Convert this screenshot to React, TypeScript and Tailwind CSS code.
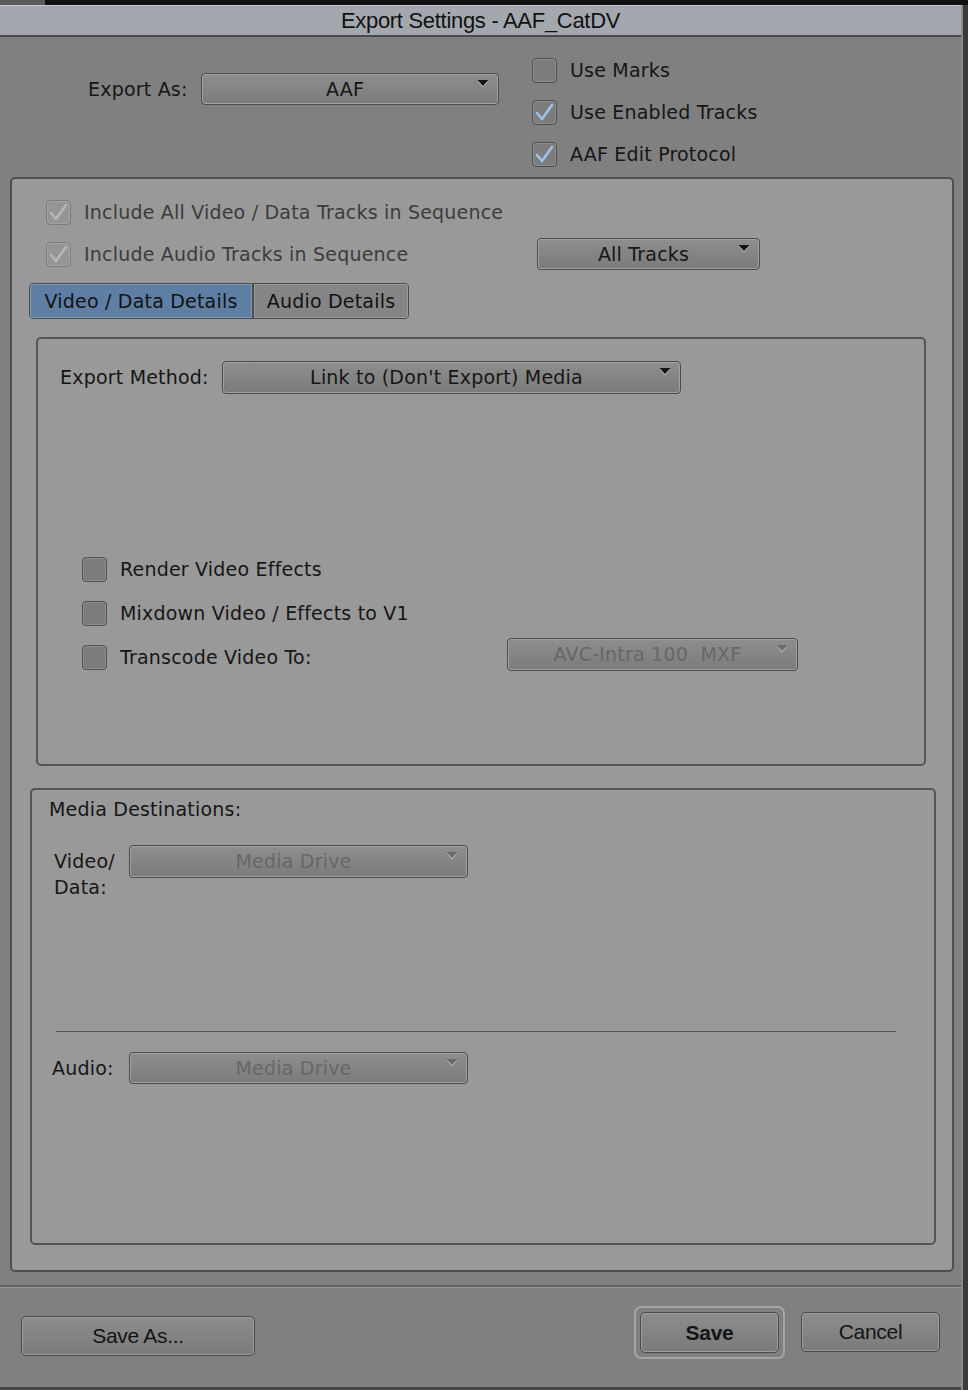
import React from 'react';

const UI = { fontFamily: '"DejaVu Sans", "Liberation Sans", sans-serif' };
const BTN = { fontFamily: '"Liberation Sans", Arial, sans-serif' };

function Arrow({ dim }: { dim?: boolean }) {
  return (
    <svg width="12" height="9" viewBox="0 0 12 9" className="absolute right-[9px] top-[5px]">
      <path d="M0.5 2 L11.5 2 L6 8.5 Z" fill="#b8b8b8" />
      <path d="M0.5 1 L11.5 1 L6 7 Z" fill={dim ? '#6a6a6a' : '#151515'} />
    </svg>
  );
}

function Dropdown({
  label,
  className,
  dim,
}: {
  label: string;
  className: string;
  dim?: boolean;
}) {
  return (
    <div
      className={`relative flex items-center justify-center rounded-[4px] border border-[#4c4c4c] bg-gradient-to-b from-[#8e8e8e] to-[#7b7b7b] shadow-[inset_0_0_0_1px_#a2a2a2] ${
        dim ? 'text-[#676767]' : 'text-[#161616]'
      } ${className}`}
    >
      <span className="pr-[10px] leading-none whitespace-pre">{label}</span>
      <Arrow dim={dim} />
    </div>
  );
}

function Check({ checked, disabled }: { checked?: boolean; disabled?: boolean }) {
  return (
    <div
      className={`relative w-[25px] h-[25px] shrink-0 rounded-[4px] border ${
        disabled
          ? 'border-[#7c7c7c] bg-[#959595] shadow-[inset_0_0_0_1px_#a4a4a4]'
          : 'border-[#505050] bg-[#7c7c7c] shadow-[inset_0_0_0_1px_#8e8e8e]'
      }`}
    >
      {checked && (
        <svg width="25" height="25" viewBox="0 0 25 25" className="absolute -left-px -top-px">
          <path
            d="M5 13 L10 19 L20 5"
            fill="none"
            stroke={disabled ? '#b6b6b6' : '#9cc2ea'}
            strokeWidth="2.6"
            strokeLinecap="round"
            strokeLinejoin="round"
          />
        </svg>
      )}
    </div>
  );
}

function CheckRow({
  label,
  checked,
  disabled,
  h = 'h-[42px]',
}: {
  label: string;
  checked?: boolean;
  disabled?: boolean;
  h?: string;
}) {
  return (
    <div className={`flex items-center gap-[13px] ${h}`}>
      <Check checked={checked} disabled={disabled} />
      <span className={`leading-none whitespace-nowrap ${disabled ? 'text-[#3c3c3c]' : 'text-[#161616]'}`}>
        {label}
      </span>
    </div>
  );
}

function Button({ label, className }: { label: string; className: string }) {
  return (
    <div
      className={`flex items-center justify-center rounded-[5px] border border-[#4a4a4a] bg-gradient-to-b from-[#8d8d8d] to-[#7a7a7a] shadow-[inset_0_0_0_1px_#9c9c9c] text-[21px] tracking-[-0.3px] text-[#141414] ${className}`}
      style={BTN}
    >
      {label}
    </div>
  );
}

export default function App() {
  return (
    <div
      className="w-[968px] h-[1390px] bg-[#2e2e2e] flex flex-col overflow-hidden text-[19px] tracking-[0.2px]"
      style={UI}
    >
      {/* top strip */}
      <div className="h-[5px] bg-[#111111] flex shrink-0">
        <div className="w-[45px] bg-[#5a5a5a]" />
      </div>

      <div className="flex flex-1 min-h-0">
        <div className="w-[961px] flex flex-col bg-[#808080]">
          {/* title bar */}
          <div
            className="h-[32px] shrink-0 flex items-center justify-center bg-[#a3a8ae] border-t border-[#c4c8cc] border-b-2 border-b-[#4a4a4a] text-[22px] text-[#111111] tracking-[-0.3px]"
            style={BTN}
          >
            Export Settings - AAF_CatDV
          </div>

          {/* top options */}
          <div className="flex pt-[12px] h-[140px] shrink-0">
            <div className="flex items-start pl-[88px] pt-[24px] w-[532px] shrink-0">
              <span className="w-[113px] text-[#161616] h-[32px] flex items-center">Export As:</span>
              <Dropdown label="AAF" className="w-[298px] h-[32px]" />
            </div>
            <div className="flex flex-col">
              <CheckRow label="Use Marks" />
              <CheckRow label="Use Enabled Tracks" checked />
              <CheckRow label="AAF Edit Protocol" checked />
            </div>
          </div>

          {/* main panel */}
          <div className="ml-[10px] w-[944px] h-[1095px] shrink-0 rounded-[5px] border-2 border-[#4e4e4e] bg-[#999999] flex flex-col">
            <div className="pt-[12px] pl-[34px]">
              <CheckRow label="Include All Video / Data Tracks in Sequence" checked disabled />
              <div className="flex items-center">
                <div className="w-[491px]">
                  <CheckRow label="Include Audio Tracks in Sequence" checked disabled />
                </div>
                <Dropdown label="All Tracks" className="w-[223px] h-[32px]" />
              </div>
            </div>

            {/* tabs */}
            <div className="mt-[8px] ml-[17px] flex w-fit rounded-[4px] border border-[#4c4c4c] bg-[#858585] h-[36px] overflow-hidden text-[#121212]">
              <div className="w-[224px] flex items-center justify-center bg-[#5e7ea3] border-r-2 border-[#4c4c4c] shadow-[inset_0_0_0_1px_#7d98b8]">
                Video / Data Details
              </div>
              <div className="w-[154px] flex items-center justify-center shadow-[inset_0_0_0_1px_#9a9a9a]">
                Audio Details
              </div>
            </div>

            {/* export method panel */}
            <div className="mt-[18px] ml-[24px] w-[890px] h-[429px] rounded-[5px] border-2 border-[#555555] flex flex-col">
              <div className="mt-[22px] ml-[22px] flex items-center">
                <span className="w-[162px] text-[#161616]">Export Method:</span>
                <Dropdown label="Link to (Don't Export) Media" className="w-[459px] h-[33px]" />
              </div>
              <div className="mt-[153px] ml-[44px] flex flex-col">
                <CheckRow label="Render Video Effects" h="h-[44px]" />
                <CheckRow label="Mixdown Video / Effects to V1" h="h-[44px]" />
                <div className="flex items-center">
                  <div className="w-[425px]">
                    <CheckRow label="Transcode Video To:" h="h-[44px]" />
                  </div>
                  <Dropdown label="AVC-Intra 100  MXF" dim className="w-[291px] h-[33px] -mt-[6px]" />
                </div>
              </div>
            </div>

            {/* media destinations panel */}
            <div className="mt-[22px] ml-[18px] w-[906px] h-[457px] rounded-[5px] border-2 border-[#555555] flex flex-col text-[#161616]">
              <div className="mt-[7px] ml-[17px] leading-[24px]">Media Destinations:</div>
              <div className="mt-[24px] ml-[22px] flex items-start">
                <div className="w-[75px] leading-[26px] mt-[3px]">
                  Video/
                  <br />
                  Data:
                </div>
                <Dropdown label="Media Drive" dim className="w-[339px] h-[33px]" />
              </div>
              <div className="mt-[131px] ml-[24px] w-[840px] h-px bg-[#555555]" />
              <div className="mt-[20px] ml-[20px] flex items-center">
                <div className="w-[77px]">Audio:</div>
                <Dropdown label="Media Drive" dim className="w-[339px] h-[32px]" />
              </div>
            </div>
          </div>

          {/* separator */}
          <div className="mt-[13px] h-[2px] bg-[#5f5f5f] shrink-0" />
          <div className="h-px bg-[#999999] shrink-0" />

          {/* buttons */}
          <div className="flex items-start pt-[17px]">
            <Button label="Save As..." className="mt-[11px] ml-[21px] w-[234px] h-[40px]" />
            <div className="ml-[379px] mt-[1px] p-[4px] rounded-[7px] border-2 border-[#a5a5a5]">
              <Button label="Save" className="w-[139px] h-[41px] font-bold" />
            </div>
            <Button label="Cancel" className="ml-[16px] mt-[7px] w-[139px] h-[40px]" />
          </div>
          <div className="flex-1" />
          <div className="h-[3px] bg-[#454545] shrink-0" />
        </div>
        <div className="flex-1 bg-[#3a3a3a] border-l-2 border-[#8a8a8a]" />
      </div>
    </div>
  );
}
